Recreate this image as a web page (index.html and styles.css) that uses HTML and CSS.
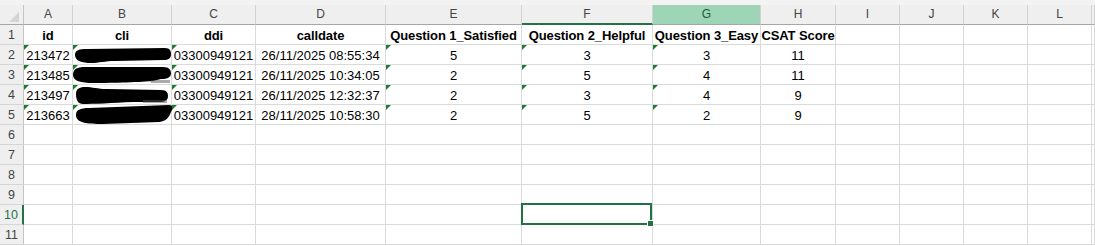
FILE: index.html
```
<!DOCTYPE html>
<html lang="en">
<head>
    <meta charset="UTF-8">
    <title>CSAT export</title>
    <link rel="stylesheet" href="styles.css">
</head>
<body>
    <div class="topband"></div>
    <div class="sheet">
        <!-- column headers -->
        <div class="corner"><svg width="24" height="20"><path d="M19 7 L19 17 L9 17 Z" fill="#d4d4d4"/></svg></div>
        <div class="colhead">A</div>
        <div class="colhead">B</div>
        <div class="colhead">C</div>
        <div class="colhead">D</div>
        <div class="colhead">E</div>
        <div class="colhead near-sel">F</div>
        <div class="colhead selected">G</div>
        <div class="colhead">H</div>
        <div class="colhead">I</div>
        <div class="colhead">J</div>
        <div class="colhead">K</div>
        <div class="colhead">L</div>
        <div class="colhead"></div>

        <!-- row 1 -->
        <div class="rowhead">1</div>
        <div class="cell bold">id</div>
        <div class="cell bold">cli</div>
        <div class="cell bold">ddi</div>
        <div class="cell bold">calldate</div>
        <div class="cell bold">Question 1_Satisfied</div>
        <div class="cell bold">Question 2_Helpful</div>
        <div class="cell bold">Question 3_Easy</div>
        <div class="cell bold">CSAT Score</div>
        <div class="cell"></div><div class="cell"></div><div class="cell"></div><div class="cell"></div><div class="cell"></div>

        <!-- row 2 -->
        <div class="rowhead">2</div>
        <div class="cell flag">213472</div>
        <div class="cell flag blot"><svg width="99" height="20"><path d="M2 10 C2 5 6 4 14 4 L92 3 C97 3 98 6 98 9 C98 13 96 15 90 15 L42 16 C32 16 26 18 18 18 C9 18 2 16 2 10 Z" fill="#000"/></svg></div>
        <div class="cell flag">03300949121</div>
        <div class="cell">26/11/2025 08:55:34</div>
        <div class="cell flag">5</div>
        <div class="cell flag">3</div>
        <div class="cell flag">3</div>
        <div class="cell">11</div>
        <div class="cell"></div><div class="cell"></div><div class="cell"></div><div class="cell"></div><div class="cell"></div>

        <!-- row 3 -->
        <div class="rowhead">3</div>
        <div class="cell flag">213485</div>
        <div class="cell flag blot"><svg width="99" height="20"><path d="M0 10 C0 4 4 2 12 2 L90 2 C96 2 98 5 98 8 C98 12 95 14 88 14 L80 16 C70 17 40 18 20 18 C8 18 0 16 0 10 Z" fill="#000"/><path d="M78 15 L97 15 L97 18 L78 18 Z" fill="#555" opacity="0.5"/></svg></div>
        <div class="cell flag">03300949121</div>
        <div class="cell">26/11/2025 10:34:05</div>
        <div class="cell flag">2</div>
        <div class="cell flag">5</div>
        <div class="cell flag">4</div>
        <div class="cell">11</div>
        <div class="cell"></div><div class="cell"></div><div class="cell"></div><div class="cell"></div><div class="cell"></div>

        <!-- row 4 -->
        <div class="rowhead">4</div>
        <div class="cell flag">213497</div>
        <div class="cell flag blot"><svg width="99" height="20"><path d="M3 9 C3 4 6 2 12 2 C20 2 24 4 34 4 L88 5 C94 5 95 8 95 11 C95 15 92 17 86 17 L60 17 C40 18 20 19 10 19 C5 19 3 15 3 9 Z" fill="#000"/><path d="M70 15 L94 15 L94 18 L70 18 Z" fill="#555" opacity="0.5"/></svg></div>
        <div class="cell flag">03300949121</div>
        <div class="cell">26/11/2025 12:32:37</div>
        <div class="cell flag">2</div>
        <div class="cell flag">3</div>
        <div class="cell flag">4</div>
        <div class="cell">9</div>
        <div class="cell"></div><div class="cell"></div><div class="cell"></div><div class="cell"></div><div class="cell"></div>

        <!-- row 5 -->
        <div class="rowhead">5</div>
        <div class="cell flag">213663</div>
        <div class="cell flag blot"><svg width="99" height="20"><path d="M3 10 C3 5 7 3 16 3 L96 0 C101 0 100 4 98 7 C96 12 94 16 86 17 L30 19 C14 19 3 18 3 10 Z" fill="#000"/></svg></div>
        <div class="cell flag">03300949121</div>
        <div class="cell">28/11/2025 10:58:30</div>
        <div class="cell flag">2</div>
        <div class="cell flag">5</div>
        <div class="cell flag">2</div>
        <div class="cell">9</div>
        <div class="cell"></div><div class="cell"></div><div class="cell"></div><div class="cell"></div><div class="cell"></div>

        <div class="rowhead">6</div>
        <div class="cell"></div><div class="cell"></div><div class="cell"></div><div class="cell"></div><div class="cell"></div><div class="cell"></div><div class="cell"></div><div class="cell"></div><div class="cell"></div><div class="cell"></div><div class="cell"></div><div class="cell"></div><div class="cell"></div>
        <div class="rowhead">7</div>
        <div class="cell"></div><div class="cell"></div><div class="cell"></div><div class="cell"></div><div class="cell"></div><div class="cell"></div><div class="cell"></div><div class="cell"></div><div class="cell"></div><div class="cell"></div><div class="cell"></div><div class="cell"></div><div class="cell"></div>
        <div class="rowhead">8</div>
        <div class="cell"></div><div class="cell"></div><div class="cell"></div><div class="cell"></div><div class="cell"></div><div class="cell"></div><div class="cell"></div><div class="cell"></div><div class="cell"></div><div class="cell"></div><div class="cell"></div><div class="cell"></div><div class="cell"></div>
        <div class="rowhead">9</div>
        <div class="cell"></div><div class="cell"></div><div class="cell"></div><div class="cell"></div><div class="cell"></div><div class="cell"></div><div class="cell"></div><div class="cell"></div><div class="cell"></div><div class="cell"></div><div class="cell"></div><div class="cell"></div><div class="cell"></div>
        <div class="rowhead active">10</div>
        <div class="cell"></div><div class="cell"></div><div class="cell"></div><div class="cell"></div><div class="cell"></div>
        <div class="cell"><div class="selection"><span class="handle"></span></div></div>
        <div class="cell"></div><div class="cell"></div><div class="cell"></div><div class="cell"></div><div class="cell"></div><div class="cell"></div><div class="cell"></div>
        <div class="rowhead">11</div>
        <div class="cell"></div><div class="cell"></div><div class="cell"></div><div class="cell"></div><div class="cell"></div><div class="cell"></div><div class="cell"></div><div class="cell"></div><div class="cell"></div><div class="cell"></div><div class="cell"></div><div class="cell"></div><div class="cell"></div>
    </div>
</body>
</html>
```

FILE: styles.css
```
html, body {
    margin: 0;
    padding: 0;
    background-color: white;
    overflow: hidden;
}
body {
    font-family: "Liberation Sans", Arial, sans-serif;
    width: 1095px;
    height: 246px;
}
.topband {
    height: 5px;
    background-color: #f3f3f3;
}
.sheet {
    display: grid;
    grid-template-columns: 24px 49px 99px 84px 130px 136px 131px 108px 75px 64px 64px 64px 64px 1fr;
    grid-template-rows: 20px;
    grid-auto-rows: 20px;
}
.corner, .colhead, .rowhead, .cell {
    box-sizing: border-box;
    position: relative;
}
.corner {
    background-color: #efefef;
    border-right: 1px solid #c4c4c4;
    border-bottom: 1px solid #a6a6a6;
}
.corner svg {
    display: block;
}
.colhead {
    background-color: #efefef;
    border-right: 1px solid #d2d2d2;
    border-bottom: 1px solid #a6a6a6;
    color: #444;
    font-size: 12px;
    text-align: center;
    line-height: 19px;
}
.colhead.selected {
    background-color: #9fd5b7;
    color: #1d5b3a;
}
.colhead.near-sel {
    border-bottom: 2px solid #217346;
    line-height: 18px;
}
.rowhead {
    background-color: #efefef;
    border-right: 1px solid #c4c4c4;
    border-bottom: 1px solid #d6d6d6;
    color: #444;
    font-size: 12.5px;
    text-align: center;
    line-height: 20px;
}
.rowhead.active {
    color: #217346;
    border-right: 2px solid #217346;
}
.cell {
    border-right: 1px solid #dadada;
    border-bottom: 1px solid #dadada;
    font-size: 13px;
    color: #000;
    text-align: center;
    line-height: 21px;
    white-space: nowrap;
}
.bold {
    font-weight: bold;
    letter-spacing: -0.1px;
}
.flag::before {
    content: "";
    position: absolute;
    left: 0;
    top: 0;
    border-top: 5px solid #1e7b34;
    border-right: 5px solid transparent;
    z-index: 2;
}
.blot svg {
    display: block;
    overflow: visible;
    position: relative;
    z-index: 1;
}
.selection {
    position: absolute;
    left: -1px;
    top: -2px;
    right: 0;
    bottom: -1px;
    border: 2px solid #217346;
    z-index: 3;
}
.handle {
    position: absolute;
    right: -4px;
    bottom: -4px;
    width: 5px;
    height: 5px;
    background-color: #217346;
    border: 1px solid white;
}
```
